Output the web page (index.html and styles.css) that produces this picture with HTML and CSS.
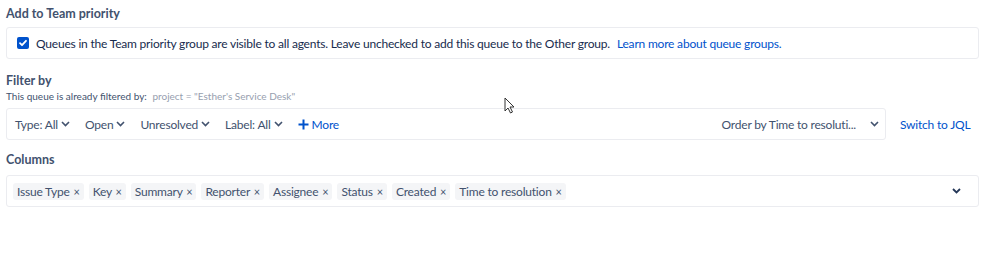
FILE: index.html
```html
<!DOCTYPE html>
<html lang="en">
<head>
<meta charset="UTF-8">
<title>Queue settings</title>
<link rel="stylesheet" href="styles.css">
</head>
<body>

<div class="section">
  <div class="section-title">Add to Team priority</div>
  <div class="panel panel-check">
    <span class="checkbox">
      <svg width="12" height="12" viewBox="0 0 12 12"><path d="M3 6.2l2 2 4-4.4" fill="none" stroke="#fff" stroke-width="1.8" stroke-linecap="round" stroke-linejoin="round"/></svg>
    </span>
    <span>Queues in the Team priority group are visible to all agents. Leave unchecked to add this queue to the Other group.</span>
    <a class="link" href="#">Learn more about queue groups.</a>
  </div>
</div>

<div class="section section-filter">
  <div class="section-title">Filter by</div>
  <div class="hint">This queue is already filtered by: <span class="hint-query">project = "Esther's Service Desk"</span></div>
  <div class="filter-row">
    <div class="panel panel-filter">
      <span class="filter">Type: All <svg class="chev" width="9" height="6" viewBox="0 0 9 6"><path d="M1 1l3.5 3.5L8 1" fill="none" stroke="#42526e" stroke-width="1.6"/></svg></span>
      <span class="filter">Open <svg class="chev" width="9" height="6" viewBox="0 0 9 6"><path d="M1 1l3.5 3.5L8 1" fill="none" stroke="#42526e" stroke-width="1.6"/></svg></span>
      <span class="filter">Unresolved <svg class="chev" width="9" height="6" viewBox="0 0 9 6"><path d="M1 1l3.5 3.5L8 1" fill="none" stroke="#42526e" stroke-width="1.6"/></svg></span>
      <span class="filter">Label: All <svg class="chev" width="9" height="6" viewBox="0 0 9 6"><path d="M1 1l3.5 3.5L8 1" fill="none" stroke="#42526e" stroke-width="1.6"/></svg></span>
      <span class="more"><svg width="11" height="11" viewBox="0 0 11 11"><path d="M5.5 0.5v10M0.5 5.5h10" stroke="#0052cc" stroke-width="2"/></svg> More</span>
      <span class="order">Order by Time to resoluti... <svg class="chev order-chev" width="9" height="6" viewBox="0 0 9 6"><path d="M1 1l3.5 3.5L8 1" fill="none" stroke="#42526e" stroke-width="1.6"/></svg></span>
    </div>
    <a class="link jql" href="#">Switch to JQL</a>
  </div>
</div>

<div class="section">
  <div class="section-title title-cols">Columns</div>
  <div class="panel panel-cols">
    <span class="tag">Issue Type <i>×</i></span>
    <span class="tag">Key <i>×</i></span>
    <span class="tag">Summary <i>×</i></span>
    <span class="tag">Reporter <i>×</i></span>
    <span class="tag">Assignee <i>×</i></span>
    <span class="tag">Status <i>×</i></span>
    <span class="tag">Created <i>×</i></span>
    <span class="tag">Time to resolution <i>×</i></span>
    <svg class="cols-chev" width="9" height="6" viewBox="0 0 9 6"><path d="M1 1l3.5 3.5L8 1" fill="none" stroke="#253858" stroke-width="1.8"/></svg>
  </div>
</div>

<svg class="cursor" width="12" height="18" viewBox="0 0 12 18"><path d="M1 1v13l3-3 2.5 5 2-1-2.5-5H10z" fill="#fff" stroke="#333" stroke-width="1"/></svg>

</body>
</html>
```

FILE: styles.css
```css
body {
    margin: 0;
    padding: 6px 20px 0 6px;
    font-family: Lato, "Noto Sans", sans-serif;
    font-size: 12px;
    letter-spacing: -0.2px;
    color: #172b4d;
    background: #fff;
    position: relative;
    height: 259px;
    box-sizing: border-box;
}
.section { margin-bottom: 14px; }
.section-filter { margin-bottom: 12px; }
.section-title {
    font-size: 12.5px;
    font-weight: 700;
    color: #42526e;
    line-height: 16px;
    margin-bottom: 5px;
    letter-spacing: 0;
}
.title-cols { margin-bottom: 7px; }
.panel {
    border: 1px solid #ebecf0;
    border-radius: 3px;
    height: 32px;
    box-sizing: border-box;
    display: flex;
    align-items: center;
}
.panel-check { padding-left: 10px; gap: 7px; }
.checkbox {
    width: 12px;
    height: 12px;
    border-radius: 2px;
    background: #0052cc;
    display: inline-flex;
}
.link { color: #0052cc; text-decoration: none; }
.hint {
    font-size: 10px;
    color: #42526e;
    line-height: 13px;
    margin-top: -4px;
    margin-bottom: 5px;
    letter-spacing: 0;
}
.hint-query { color: #97a0af; margin-left: 3px; }
.filter-row { display: flex; align-items: center; }
.panel-filter {
    width: 880px;
    padding: 0 6px 0 8px;
    color: #42526e;
}
.filter { margin-right: 15px; display: inline-flex; align-items: center; gap: 3px; }
.chev { display: block; }
.more { color: #0052cc; display: inline-flex; align-items: center; gap: 3px; }
.order { margin-left: auto; display: inline-flex; align-items: center; gap: 14px; }
.jql { margin-left: 14px; }
.panel-cols { padding: 0 6px; gap: 5px; }
.tag {
    background: #f4f5f7;
    color: #42526e;
    height: 17px;
    line-height: 17px;
    padding: 0 4px;
    border-radius: 3px;
}
.tag i { font-style: normal; font-size: 11px; margin-left: 1px; }
.cols-chev { margin-left: auto; margin-right: 11px; }
.cursor { position: absolute; left: 504px; top: 97px; }
```
